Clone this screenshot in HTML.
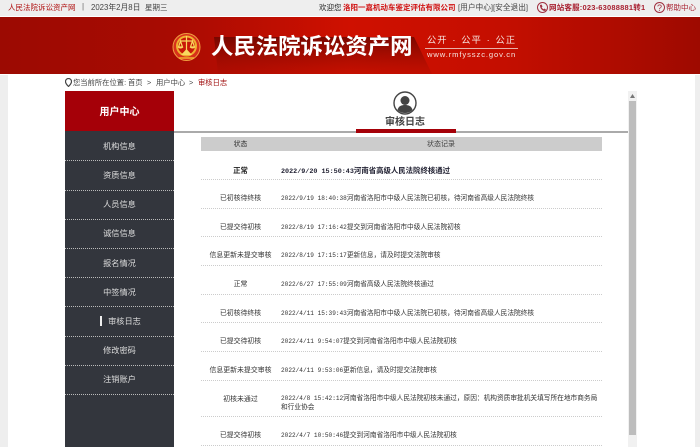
<!DOCTYPE html>
<html lang="zh"><head><meta charset="utf-8"><style>
html,body{margin:0;padding:0;width:700px;height:447px;overflow:hidden;background:#fff}
body{position:relative;font-family:"Liberation Sans","Noto Sans CJK SC",sans-serif;font-size:7.3px;color:#444}
.a{position:absolute;white-space:nowrap;line-height:10px}
.nav{position:absolute;left:65px;width:109px;text-align:center;color:#ddd;font-size:8.2px;line-height:12px}
.dot{position:absolute;left:65px;width:109px;border-top:1px dotted #bbb;height:0}
.rd{position:absolute;left:201px;width:401px;border-top:1px dotted #ccc;height:0}
.c1{position:absolute;left:207px;width:67px;text-align:center;font-size:6.9px;line-height:10px;color:#333;white-space:nowrap}
.c2{position:absolute;left:281px;width:321px;font-size:6.7px;line-height:10px;color:#333;white-space:nowrap}
.c2 b{font-weight:400;font-family:"Liberation Mono",monospace;font-size:6.1px}
</style></head><body>
<div style="position:absolute;left:0;top:0;width:700px;height:16px;background:#eee"></div>
<div class="a" style="left:8px;top:3px;color:#b01010;font-size:7.500px">人民法院诉讼资产网</div>
<div class="a" style="left:82px;top:2px;color:#666;font-size:8px">|</div>
<div class="a" style="left:91px;top:3px;font-size:7.800px">2023年2月8日</div>
<div class="a" style="left:145px;top:3px;font-size:7.500px">星期三</div>
<div class="a" style="left:319px;top:3px;font-size:7.500px;color:#222">欢迎您</div>
<div class="a" style="left:343px;top:3px;font-size:7.500px;color:#d01010;font-weight:700">洛阳一嘉机动车鉴定评估有限公司</div>
<div class="a" style="left:458px;top:3px;font-size:7.700px">[用户中心][安全退出]</div>
<svg style="position:absolute;left:536px;top:1px" width="13" height="13" viewBox="0 0 13 13"><circle cx="6.500" cy="6.500" r="5" fill="none" stroke="#a03040" stroke-width="1"/><path d="M4 4l1.500-.5 1 2-.8.8c.4 1 1 1.600 2 2l.8-.8 1.600 1.200c-.6 1.200-1.400 1.400-2.600 1C5.500 9 4 7 4 4z" fill="#a03040"/></svg>
<div class="a" style="left:549px;top:3px;font-size:7.500px;color:#a82030;letter-spacing:.2px;font-weight:700">网站客服:023-63088881转1</div>
<svg style="position:absolute;left:653px;top:1px" width="13" height="13" viewBox="0 0 13 13"><circle cx="6.500" cy="6.500" r="5" fill="none" stroke="#a03040" stroke-width="1"/><text x="6.500" y="10" text-anchor="middle" font-size="9" fill="#a03040" font-family="Liberation Sans">?</text></svg>
<div class="a" style="left:666px;top:3px;font-size:7.500px;color:#a82030">帮助中心</div>

<div style="position:absolute;left:0;top:17px;width:700px;height:57px;background:linear-gradient(90deg,#9c0a02 0,#a80b02 25%,#cf1000 50%,#c40e00 72%,#9e0a00 100%)"></div>
<svg style="position:absolute;left:0;top:17px" width="700" height="57"><defs><linearGradient id="g" x1="0" x2="0" y1="0" y2="1"><stop offset="0" stop-color="#6c0600" stop-opacity=".85"/><stop offset="1" stop-color="#a00c00" stop-opacity=".2"/></linearGradient></defs><polygon points="214,20 414,20 432,57 218,57" fill="url(#g)"/></svg>
<svg style="position:absolute;left:172px;top:31px" width="29" height="32" viewBox="0 0 29 32">
<circle cx="14.500" cy="16" r="13.500" fill="#d8301a"/><circle cx="14.500" cy="16" r="13.500" fill="none" stroke="#f0a040" stroke-width="1"/><circle cx="14.500" cy="15" r="10.500" fill="#f0b030"/><circle cx="14.500" cy="15" r="8.500" fill="#c81808"/>
<path d="M14.500 5v15M8 10h13M6.500 16l2-6 2 6zM18.500 16l2-6 2 6z" stroke="#f8d860" stroke-width="1.200" fill="none"/><path d="M6 16h5c0 2-5 2-5 0zM18 16h5c0 2-5 2-5 0zM9 24l5.500-6 5.500 6z" fill="#f8d860"/><path d="M7 27h15" stroke="#f0b030" stroke-width="1.500"/></svg>
<div class="a" style="left:211px;top:33px;font-size:22.400px;line-height:28px;font-weight:700;color:#fff">人民法院诉讼资产网</div>
<div class="a" style="left:427px;top:35px;font-size:9.300px;line-height:11px;color:#f6e6e0;word-spacing:1.200px;letter-spacing:1px">公开 · 公平 · 公正</div>
<div style="position:absolute;left:425px;top:48px;width:93px;height:1px;background:#e8b0a8"></div>
<div class="a" style="left:427px;top:50px;font-size:7.600px;letter-spacing:.9px;color:#f6e6e0">www.rmfysszc.gov.cn</div>

<div style="position:absolute;left:0;top:75px;width:8px;height:372px;background:#eee"></div>
<div style="position:absolute;left:695px;top:75px;width:5px;height:372px;background:#eee"></div>

<svg style="position:absolute;left:65px;top:78px" width="7" height="9" viewBox="0 0 7 9"><path d="M3.500.5a3 3 0 0 1 3 3c0 2-3 5-3 5s-3-3-3-5a3 3 0 0 1 3-3z" fill="none" stroke="#444" stroke-width="1.200"/></svg>
<div class="a" style="left:73px;top:78px;font-size:7.300px">您当前所在位置:</div>
<div class="a" style="left:128px;top:78px;font-size:7.300px">首页</div>
<div class="a" style="left:147px;top:78px;font-size:7.300px">&gt;</div>
<div class="a" style="left:156px;top:78px;font-size:7.300px">用户中心</div>
<div class="a" style="left:189px;top:78px;font-size:7.300px">&gt;</div>
<div class="a" style="left:198px;top:78px;font-size:7.300px;color:#a01010">审核日志</div>

<div style="position:absolute;left:65px;top:91px;width:109px;height:40px;background:#a50008"></div>
<div class="a" style="left:65px;width:109px;top:107px;line-height:12px;text-align:center;color:#fff;font-size:10px;font-weight:700">用户中心</div>
<div style="position:absolute;left:65px;top:131px;width:109px;height:316px;background:#33363d"></div>
<div class="nav" style="top:141px">机构信息</div><div class="dot" style="top:160px"></div>
<div class="nav" style="top:170px">资质信息</div><div class="dot" style="top:190px"></div>
<div class="nav" style="top:199px">人员信息</div><div class="dot" style="top:219px"></div>
<div class="nav" style="top:228px">诚信信息</div><div class="dot" style="top:248px"></div>
<div class="nav" style="top:258px">报名情况</div><div class="dot" style="top:277px"></div>
<div class="nav" style="top:287px">中签情况</div><div class="dot" style="top:306px"></div>
<div style="position:absolute;left:100px;top:316px;width:2px;height:10px;background:#eee"></div>
<div class="nav" style="top:316px;left:70px">审核日志</div><div class="dot" style="top:336px"></div>
<div class="nav" style="top:345px">修改密码</div><div class="dot" style="top:365px"></div>
<div class="nav" style="top:374px">注销账户</div><div class="dot" style="top:394px"></div>

<div style="position:absolute;left:174px;top:131px;width:454px;height:2px;background:#aaa"></div>
<div style="position:absolute;left:356px;top:129px;width:100px;height:4px;background:#a50008"></div>
<svg style="position:absolute;left:393px;top:91px" width="24" height="24" viewBox="0 0 24 24"><circle cx="12" cy="12" r="11" fill="none" stroke="#444" stroke-width="1.400"/><circle cx="12" cy="9.500" r="4.500" fill="#444"/><path d="M4.500 19c1-4 4-5 7.500-5s6.500 1 7.500 5c-2 2-4.500 3-7.500 3s-5.500-1-7.500-3z" fill="#444"/></svg>
<div class="a" style="left:385px;top:117px;line-height:12px;font-size:10px;font-weight:700;color:#444">审核日志</div>

<div style="position:absolute;left:201px;top:137px;width:401px;height:14px;background:#ccc"></div>
<div class="c1" style="top:140px">状态</div>
<div class="a" style="left:427px;top:140px;font-size:7px">状态记录</div>

<div class="c1" style="top:166px;font-weight:700;color:#222;font-size:7.400px">正常</div>
<div class="c2" style="top:166px;font-weight:700;color:#223;font-size:7.400px"><b style="font-weight:700;font-size:6.750px">2022/9/20 15:50:43</b>河南省高级人民法院终核通过</div><div class="rd" style="top:179px"></div>
<div class="c1" style="top:194px">已初核待终核</div>
<div class="c2" style="top:194px"><b>2022/9/19 18:40:38</b>河南省洛阳市中级人民法院已初核，待河南省高级人民法院终核</div><div class="rd" style="top:208px"></div>
<div class="c1" style="top:223px">已提交待初核</div>
<div class="c2" style="top:223px"><b>2022/8/19 17:16:42</b>提交到河南省洛阳市中级人民法院初核</div><div class="rd" style="top:236px"></div>
<div class="c1" style="top:251px">信息更新未提交审核</div>
<div class="c2" style="top:251px"><b>2022/8/19 17:15:17</b>更新信息，请及时提交法院审核</div><div class="rd" style="top:265px"></div>
<div class="c1" style="top:280px">正常</div>
<div class="c2" style="top:280px"><b>2022/6/27 17:55:09</b>河南省高级人民法院终核通过</div><div class="rd" style="top:294px"></div>
<div class="c1" style="top:309px">已初核待终核</div>
<div class="c2" style="top:309px"><b>2022/4/11 15:39:43</b>河南省洛阳市中级人民法院已初核，待河南省高级人民法院终核</div><div class="rd" style="top:322px"></div>
<div class="c1" style="top:337px">已提交待初核</div>
<div class="c2" style="top:337px"><b>2022/4/11 9:54:07</b>提交到河南省洛阳市中级人民法院初核</div><div class="rd" style="top:351px"></div>
<div class="c1" style="top:366px">信息更新未提交审核</div>
<div class="c2" style="top:366px"><b>2022/4/11 9:53:06</b>更新信息，请及时提交法院审核</div><div class="rd" style="top:380px"></div>
<div class="c1" style="top:395px">初核未通过</div>
<div class="c2" style="top:395px;line-height:8.500px"><b>2022/4/8 15:42:12</b>河南省洛阳市中级人民法院初核未通过，原因：机构资质审批机关填写所在地市商务局<br>和行业协会</div><div class="rd" style="top:416px"></div>
<div class="c1" style="top:431px">已提交待初核</div>
<div class="c2" style="top:431px"><b>2022/4/7 10:50:46</b>提交到河南省洛阳市中级人民法院初核</div><div class="rd" style="top:445px"></div>

<div style="position:absolute;left:628px;top:91px;width:9px;height:356px;background:#f1f1f1"></div>
<div style="position:absolute;left:629px;top:101px;width:7px;height:334px;background:#bdbdbd"></div>
<svg style="position:absolute;left:630px;top:94px" width="5" height="4"><path d="M2.500 0L5 4H0z" fill="#777"/></svg>
</body></html>
